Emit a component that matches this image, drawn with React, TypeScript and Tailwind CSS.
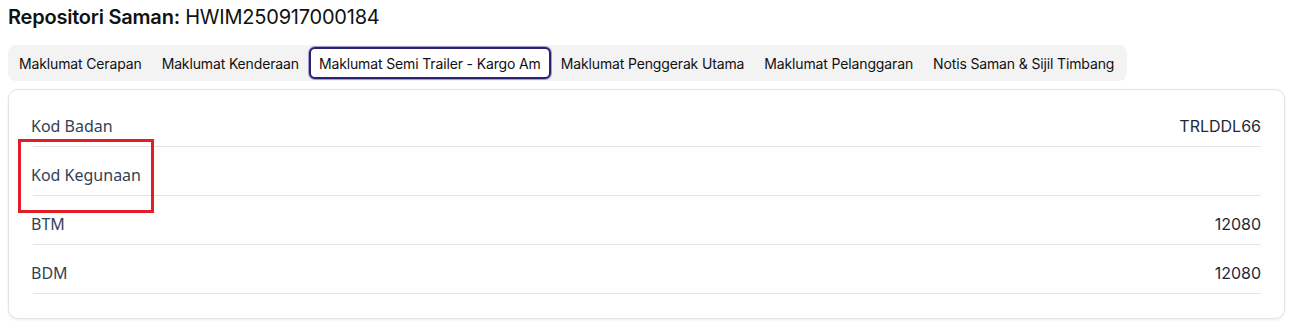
import React from "react";

const tabs = [
  "Maklumat Cerapan",
  "Maklumat Kenderaan",
  "Maklumat Semi Trailer - Kargo Am",
  "Maklumat Penggerak Utama",
  "Maklumat Pelanggaran",
  "Notis Saman & Sijil Timbang",
];

const rows: [string, string][] = [
  ["Kod Badan", "TRLDDL66"],
  ["Kod Kegunaan", ""],
  ["BTM", "12080"],
  ["BDM", "12080"],
];

export default function App() {
  return (
    <div className="w-[1298px] h-[336px] bg-white px-2 pt-[3px] font-['Inter',sans-serif]">
      <h1 className="text-[20px] leading-7 text-[#111111] tracking-[-0.22px]">
        <span className="font-semibold">Repositori Saman:</span>{" "}
        <span className="font-normal">HWIM250917000184</span>
      </h1>
      <div className="mt-[14px] inline-flex items-center rounded-lg bg-[#f3f3f4] p-[2px] pl-[1px] pr-[3px]">
        {tabs.map((t, i) => (
          <div
            key={t}
            className={
              i === 2
                ? "h-[32px] flex items-center rounded-md border-2 border-[#2c2170] bg-white px-2 text-[14px] text-[#111] tracking-[-0.14px] shadow-[0_0_0_1px_#a59fd0]"
                : "h-[32px] flex items-center rounded-md border-2 border-transparent px-2 text-[14px] text-[#111] tracking-[-0.14px]"
            }
          >
            {t}
          </div>
        ))}
      </div>
      <div className="relative mt-[8px] w-[1277px] rounded-[10px] border border-[#e4e4e7] bg-white pl-6 pr-[23px] pt-[8px] pb-6 shadow-[0_1px_3px_rgba(0,0,0,0.08)]">
        {rows.map(([k, v]) => (
          <div
            key={k}
            className="flex items-center justify-between border-b border-[#e5e5e5] pt-4 pb-2 leading-6"
          >
            <span className="-ml-[2px] text-[16px] text-[#334155] font-['Noto_Sans',sans-serif]">{k}</span>
            <span className="text-[16px] text-[#1e293b]">{v}</span>
          </div>
        ))}
        <div className="absolute left-[9px] top-[49px] h-[74px] w-[136px] border-[3px] border-[#e21f26]" />
      </div>
    </div>
  );
}
